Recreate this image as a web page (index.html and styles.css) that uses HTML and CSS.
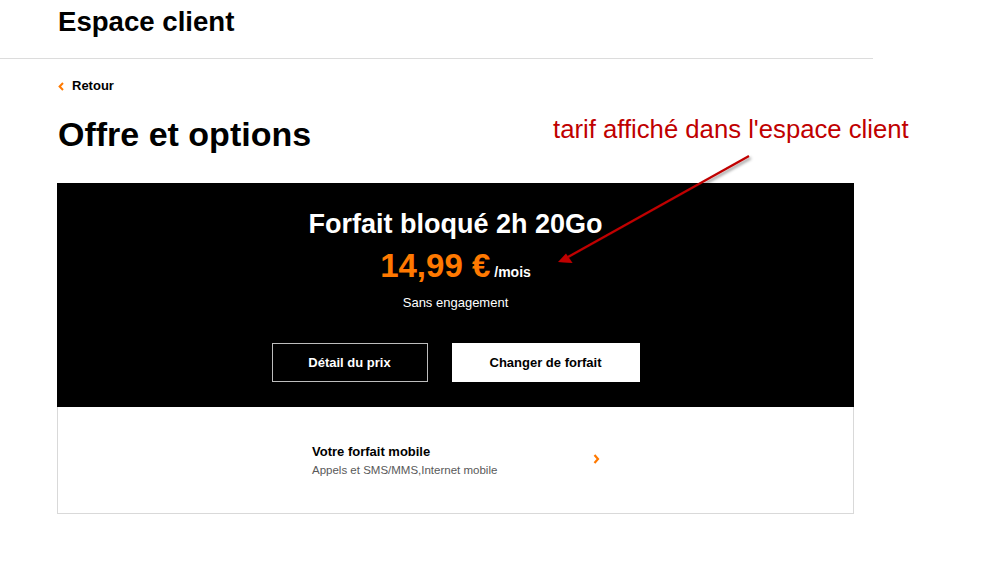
FILE: index.html
```html
<!DOCTYPE html>
<html lang="fr">
<head>
<meta charset="utf-8">
<title>Offre et options</title>
<link rel="stylesheet" href="styles.css">
</head>
<body>
<div class="page">
  <header class="top">
    <h1 class="brand">Espace client</h1>
  </header>
  <main class="content">
    <a class="back" href="#">
      <svg class="back-ico" width="6" height="9" viewBox="0 0 6 9"><path d="M5 1 L1.6 4.5 L5 8" fill="none" stroke="#ff7900" stroke-width="2"/></svg>
      <span>Retour</span>
    </a>
    <h2 class="title">Offre et options</h2>
    <section class="card">
      <div class="card-top">
        <div class="plan">Forfait bloqué 2h 20Go</div>
        <div class="price"><span class="amount">14,99 €</span><span class="per">/mois</span></div>
        <div class="terms">Sans engagement</div>
        <div class="actions">
          <a class="btn btn-outline" href="#">Détail du prix</a>
          <a class="btn btn-solid" href="#">Changer de forfait</a>
        </div>
      </div>
      <a class="card-row" href="#">
        <div class="row-inner">
          <div class="row-text">
            <div class="row-title">Votre forfait mobile</div>
            <div class="row-sub">Appels et SMS/MMS,Internet mobile</div>
          </div>
          <svg class="row-ico" width="7" height="10" viewBox="0 0 7 10"><path d="M1.5 1 L5 5 L1.5 9" fill="none" stroke="#ff7900" stroke-width="2.2"/></svg>
        </div>
      </a>
    </section>
  </main>
</div>
<div class="note">tarif affiché dans l'espace client</div>
<svg class="arrow" width="999" height="581" viewBox="0 0 999 581">
  <defs>
    <filter id="sh" x="-20%" y="-20%" width="140%" height="140%">
      <feDropShadow dx="1.5" dy="2" stdDeviation="1.6" flood-color="#000" flood-opacity="0.45"/>
    </filter>
  </defs>
  <g filter="url(#sh)">
    <line x1="749" y1="156" x2="568" y2="257" stroke="#c00000" stroke-width="2.2"/>
    <polygon points="558,262 566,253.5 572.5,263" fill="#c00000"/>
  </g>
</svg>
</body>
</html>
```
FILE: styles.css
```css
* { box-sizing: border-box; }
html, body { margin: 0; padding: 0; background: #fff; }
body {
  font-family: "Liberation Sans", Arial, Helvetica, sans-serif;
  color: #000;
  position: relative;
  width: 999px;
  height: 581px;
  overflow: hidden;
}
a { color: inherit; text-decoration: none; }

.page { width: 873px; }

.top {
  height: 59px;
  border-bottom: 1px solid #dcdcdc;
  padding: 5px 0 0 58px;
}
.brand {
  margin: 0;
  font-size: 27.6px;
  line-height: 34px;
  font-weight: 700;
}

.content { padding: 0 0 0 57px; }

.back {
  display: flex;
  align-items: center;
  gap: 8px;
  margin: 18px 0 0 1px;
  font-size: 13px;
  font-weight: 700;
  line-height: 18px;
}
.back-ico { display: block; }

.title {
  margin: 19px 0 0 1px;
  font-size: 34px;
  line-height: 40px;
  font-weight: 700;
}

.card {
  margin-top: 29px;
  width: 797px;
  border: 1px solid #d9d9d9;
}
.card-top {
  background: #000;
  color: #fff;
  margin: -1px -1px 0 -1px;
  padding: 25px 0 25px;
  display: flex;
  flex-direction: column;
  align-items: center;
}
.plan {
  font-size: 27px;
  line-height: 32px;
  font-weight: 700;
}
.price {
  margin-top: 6px;
  line-height: 40px;
  display: flex;
  align-items: baseline;
  gap: 4px;
}
.amount {
  color: #ff7900;
  font-size: 33px;
  font-weight: 700;
}
.per {
  font-size: 14px;
  font-weight: 700;
}
.terms {
  margin-top: 2px;
  font-size: 13px;
  line-height: 18px;
}
.actions {
  margin-top: 31px;
  display: flex;
  gap: 24px;
}
.btn {
  height: 39px;
  display: flex;
  align-items: center;
  justify-content: center;
  font-size: 13px;
  font-weight: 700;
}
.btn-outline {
  width: 156px;
  border: 1px solid #bdbdbd;
  color: #fff;
}
.btn-solid {
  width: 188px;
  background: #fff;
  color: #000;
}

.card-row {
  display: block;
  height: 106px;
  padding-top: 36px;
}
.row-inner {
  width: 288px;
  margin-left: 254px;
  display: flex;
  align-items: center;
  justify-content: space-between;
}
.row-title {
  font-size: 13px;
  font-weight: 700;
  line-height: 18px;
}
.row-sub {
  margin-top: 1px;
  font-size: 11.5px;
  color: #595959;
  line-height: 16px;
}
.row-ico { display: block; margin-top: -3px; }

.note {
  position: absolute;
  left: 553px;
  top: 114px;
  font-size: 25.7px;
  line-height: 30px;
  color: #c00000;
  white-space: nowrap;
}
.arrow {
  position: absolute;
  left: 0;
  top: 0;
  pointer-events: none;
}
```
